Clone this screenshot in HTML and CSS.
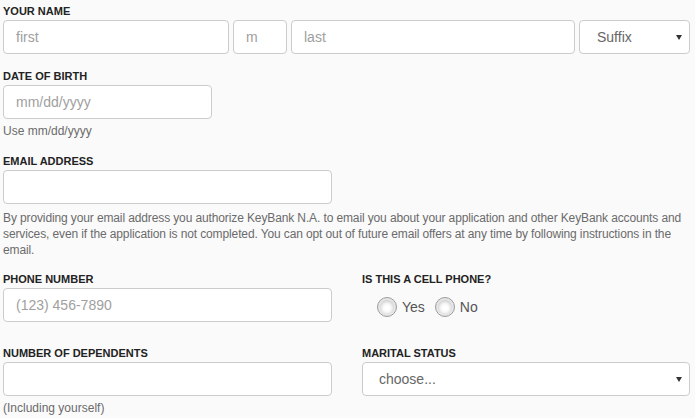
FILE: index.html
```html
<!DOCTYPE html>
<html lang="en">
<head>
  <meta charset="UTF-8">
  <meta name="viewport" content="width=device-width, initial-scale=1.0">
  <title>Application - About You</title>
  <link rel="stylesheet" href="styles.css">
</head>
<body>
  <form class="app-form">
    <div class="field field-name">
      <label class="field-label">YOUR NAME</label>
      <div class="name-row">
        <input class="text-input" type="text" placeholder="first">
        <input class="text-input" type="text" placeholder="m">
        <input class="text-input" type="text" placeholder="last">
        <div class="select-wrap">
          <select class="select-input">
            <option>Suffix</option>
            <option>Jr.</option>
            <option>Sr.</option>
            <option>II</option>
            <option>III</option>
          </select>
        </div>
      </div>
    </div>

    <div class="field field-dob">
      <label class="field-label">DATE OF BIRTH</label>
      <input class="text-input input-dob" type="text" placeholder="mm/dd/yyyy">
      <div class="hint">Use mm/dd/yyyy</div>
    </div>

    <div class="field field-email">
      <label class="field-label">EMAIL ADDRESS</label>
      <input class="text-input input-half" type="email">
      <p class="disclaimer">By providing your email address you authorize KeyBank N.A. to email you about your application and other KeyBank accounts and services, even if the application is not completed. You can opt out of future email offers at any time by following instructions in the email.</p>
    </div>

    <div class="two-col">
      <div class="field field-phone">
        <label class="field-label">PHONE NUMBER</label>
        <input class="text-input" type="tel" placeholder="(123) 456-7890">
      </div>
      <div class="field">
        <label class="field-label">IS THIS A CELL PHONE?</label>
        <div class="radio-group">
          <label class="radio-option"><input type="radio" name="cell"><span class="radio-dot"></span>Yes</label>
          <label class="radio-option"><input type="radio" name="cell"><span class="radio-dot"></span>No</label>
        </div>
      </div>

      <div class="field">
        <label class="field-label">NUMBER OF DEPENDENTS</label>
        <input class="text-input" type="text">
        <div class="hint">(Including yourself)</div>
      </div>
      <div class="field">
        <label class="field-label">MARITAL STATUS</label>
        <div class="select-wrap">
          <select class="select-input">
            <option>choose...</option>
            <option>Single</option>
            <option>Married</option>
            <option>Separated</option>
          </select>
        </div>
      </div>
    </div>
  </form>
</body>
</html>
```

FILE: styles.css
```css
body {
  margin: 0;
  padding: 3px 5px 0 3px;
  background-color: #FAFAFA;
  font-family: 'Liberation Sans', Arial, sans-serif;
  color: #222222;
}

.app-form {
  width: 687px;
}

.field-label {
  display: block;
  font-size: 11px;
  font-weight: 700;
  line-height: 16px;
  margin-bottom: 1px;
  color: #222222;
}

.text-input,
.select-input {
  box-sizing: border-box;
  display: block;
  width: 100%;
  height: 34px;
  margin: 0;
  padding: 0 12px;
  border: 1px solid #CCCCCC;
  border-radius: 4px;
  background-color: #FFFFFF;
  font-family: inherit;
  font-size: 14px;
  color: #555555;
  outline: none;
}

.text-input::placeholder {
  color: #A0A0A0;
}

.field-name {
  margin-bottom: 14px;
}

.name-row {
  display: grid;
  grid-template-columns: 226px 54px 284px 1fr;
  gap: 4px;
}

.select-wrap {
  position: relative;
}

.select-input {
  appearance: none;
  -webkit-appearance: none;
  padding-left: 16px;
  color: #666666;
}

.select-wrap::after {
  content: "";
  position: absolute;
  right: 8px;
  top: 15px;
  border-left: 3px solid transparent;
  border-right: 3px solid transparent;
  border-top: 5px solid #333333;
  pointer-events: none;
}

.name-row .select-input {
  padding-left: 17px;
}

.input-dob {
  width: 209px;
}

.hint {
  margin-top: 4px;
  font-size: 12px;
  line-height: 16px;
  color: #6B6B6B;
}

.field-dob {
  margin-bottom: 14px;
}

.input-half {
  width: 329px;
}

.disclaimer {
  margin: 6px 0 13px;
  font-size: 12px;
  line-height: 16px;
  letter-spacing: -0.12px;
  color: #6B6B6B;
}

.two-col {
  display: grid;
  grid-template-columns: 329px 1fr;
  column-gap: 30px;
}

.field-phone {
  margin-bottom: 23px;
}

.radio-group {
  display: flex;
  gap: 10px;
  margin-top: 10px;
  padding-left: 15px;
}

.radio-option {
  display: flex;
  align-items: center;
  font-size: 14px;
  color: #555555;
  cursor: pointer;
}

.radio-option input {
  display: none;
}

.radio-dot {
  box-sizing: border-box;
  width: 20px;
  height: 20px;
  margin-right: 5px;
  border: 1px solid #9C9C9C;
  border-radius: 50%;
  background-color: #FFFFFF;
  box-shadow: inset 0 0 0 2px #E6E6E6, inset 0 1px 4px 2px #BDBDBD;
}
```
